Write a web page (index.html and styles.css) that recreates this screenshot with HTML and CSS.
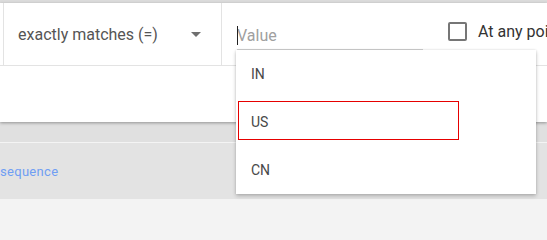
FILE: index.html
```html
<!DOCTYPE html>
<html>
<head>
<meta charset="utf-8">
<link rel="stylesheet" href="styles.css">
</head>
<body>
<div class="strip"></div>
<div class="card">
  <div class="row">
    <div class="cell match">
      <span class="match-text">exactly matches (=)</span>
      <span class="arrow"></span>
    </div>
    <div class="cell value">
      <div class="input"><span class="cursor"></span><span class="placeholder">Value</span></div>
    </div>
    <div class="cell check">
      <span class="box"></span>
      <span class="label">At any point</span>
    </div>
  </div>
</div>
<div class="gap"></div>
<div class="seq"><a class="seq-link">sequence</a></div>
<div class="foot"></div>

<div class="menu">
  <div class="item">IN</div>
  <div class="item">US</div>
  <div class="item">CN</div>
  <div class="highlight"></div>
</div>
</body>
</html>
```

FILE: styles.css
```css
html, body {
  margin: 0;
  padding: 0;
  background: #f3f3f3;
  font-family: Roboto, "Noto Sans", Arial, sans-serif;
  overflow: hidden;
  width: 547px;
  height: 215px;
}

.strip {
  height: 3px;
  background: #dcdcdc;
}

.card {
  position: relative;
  z-index: 1;
  background: #fff;
  height: 119px;
  box-shadow: 0 1px 3px rgba(0, 0, 0, 0.35);
  overflow: hidden;
}

.row {
  display: flex;
  height: 62px;
  border-bottom: 1px solid #e3e3e3;
  white-space: nowrap;
}

.cell {
  box-sizing: border-box;
  height: 62px;
  flex-shrink: 0;
}

.match {
  margin-left: 3px;
  width: 219px;
  border-left: 1px solid #e3e3e3;
  border-right: 1px solid #e3e3e3;
  display: flex;
  align-items: center;
  justify-content: space-between;
  padding: 1px 20px 0 14px;
}

.match-text {
  font-size: 16px;
  color: #555;
  line-height: 19px;
}

.arrow {
  width: 0;
  height: 0;
  border-left: 5px solid transparent;
  border-right: 5px solid transparent;
  border-top: 5px solid #6f6f6f;
}

.value {
  width: 210px;
  padding-left: 15px;
}

.input {
  margin-top: 23px;
  width: 186px;
  height: 19px;
  padding-bottom: 4px;
  border-bottom: 1px solid #d2d2d2;
  display: flex;
  align-items: stretch;
  font-size: 16px;
  line-height: 19px;
}

.cursor {
  width: 1px;
  background: #222;
  margin-right: -1px;
  position: relative;
  z-index: 1;
}

.placeholder {
  color: #a0a0a0;
}

.check {
  display: flex;
  align-items: center;
  padding-left: 16px;
  padding-bottom: 5px;
}

.box {
  box-sizing: border-box;
  width: 19px;
  height: 19px;
  border: 2px solid #767676;
  border-radius: 2px;
}

.label {
  margin-left: 11px;
  font-size: 16px;
  color: #333;
}

.gap {
  height: 20px;
  background: #e0e0e0;
  border-bottom: 1px solid #f4f4f4;
}

.seq {
  height: 56px;
  background: #e3e3e3;
  display: flex;
  align-items: center;
  padding-top: 1px;
  box-sizing: border-box;
}

.seq-link {
  font-size: 13px;
  color: #6f9ef3;
  letter-spacing: 0.3px;
  margin-left: 0;
}

.foot {
  height: 16px;
  background: #f3f3f3;
}

.menu {
  position: absolute;
  z-index: 5;
  left: 236px;
  top: 50px;
  width: 300px;
  background: #fff;
  box-shadow: 0 2px 4px rgba(0, 0, 0, 0.22), 0 0 2px rgba(0, 0, 0, 0.12);
}

.item {
  height: 48px;
  display: flex;
  align-items: center;
  padding-left: 15px;
  font-size: 14px;
  color: #484848;
}

.highlight {
  position: absolute;
  left: 2px;
  top: 51px;
  width: 221px;
  height: 39px;
  box-sizing: border-box;
  border: 1px solid #e60000;
}
```
